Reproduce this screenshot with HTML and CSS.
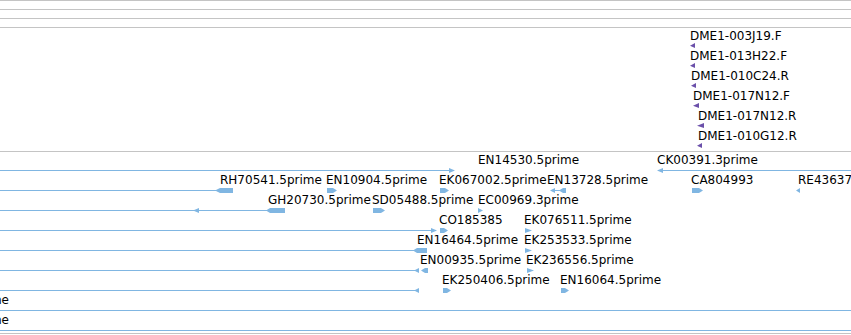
FILE: index.html
```html
<!DOCTYPE html>
<html>
<head>
<meta charset="utf-8">
<title>Tracks</title>
<link rel="stylesheet" href="styles.css">
</head>
<body>
<div class="browser">
  <div class="ruler">
    <div class="hl"></div>
    <div class="hl"></div>
    <div class="hl"></div>
    <div class="hl"></div>
  </div>

  <div class="track purple">
    <div class="row">
      <span class="lbl" style="left:690px">DME1-003J19.F</span>
      <span class="pm" style="left:690px;width:5px"></span>
    </div>
    <div class="row">
      <span class="lbl" style="left:690px">DME1-013H22.F</span>
      <span class="pm" style="left:690px;width:5px"></span>
    </div>
    <div class="row">
      <span class="lbl" style="left:691px">DME1-010C24.R</span>
      <span class="pm" style="left:691px;width:5px"></span>
    </div>
    <div class="row">
      <span class="lbl" style="left:693px">DME1-017N12.F</span>
      <span class="pm" style="left:693px;width:6px"></span>
    </div>
    <div class="row">
      <span class="lbl" style="left:698px">DME1-017N12.R</span>
      <span class="pm" style="left:697px;width:7px"></span>
    </div>
    <div class="row">
      <span class="lbl" style="left:698px">DME1-010G12.R</span>
      <span class="pm" style="left:697px;width:5px"></span>
    </div>
  </div>

  <div class="sep"></div>

  <div class="track blue">
    <div class="row">
      <span class="ln" style="left:0;width:450px"></span>
      <span class="f tri-r" style="left:449px;width:6px"></span>
      <span class="lbl" style="left:478px">EN14530.5prime</span>
      <span class="lbl" style="left:657px">CK00391.3prime</span>
      <span class="f tri-l" style="left:657px;width:6px"></span>
      <span class="ln" style="left:662px;width:189px"></span>
    </div>
    <div class="row">
      <span class="ln" style="left:0;width:216px"></span>
      <span class="f tri-l" style="left:215px;width:5px"></span>
      <span class="f" style="left:220px;width:13px"></span>
      <span class="lbl" style="left:220px">RH70541.5prime</span>
      <span class="lbl" style="left:326px">EN10904.5prime</span>
      <span class="f box-r" style="left:327px;width:10px"></span>
      <span class="lbl" style="left:439px">EK067002.5prime</span>
      <span class="f box-r" style="left:440px;width:9px"></span>
      <span class="lbl" style="left:547px">EN13728.5prime</span>
      <span class="f tri-l" style="left:550px;width:5px"></span>
      <span class="ln" style="left:554px;width:6px"></span>
      <span class="f box-l" style="left:559px;width:7px"></span>
      <span class="lbl" style="left:691px">CA804993</span>
      <span class="f box-r" style="left:692px;width:11px"></span>
      <span class="lbl" style="left:798px">RE43637.5prime</span>
      <span class="f tri-l" style="left:796px;width:4px"></span>
    </div>
    <div class="row">
      <span class="ln" style="left:0;width:268px"></span>
      <span class="f tri-l" style="left:193px;width:6px"></span>
      <span class="f box-l" style="left:266px;width:19px"></span>
      <span class="lbl" style="left:268px">GH20730.5prime</span>
      <span class="lbl" style="left:372px">SD05488.5prime</span>
      <span class="f box-r" style="left:373px;width:12px"></span>
      <span class="lbl" style="left:478px">EC00969.3prime</span>
      <span class="f tri-r" style="left:478px;width:5px"></span>
    </div>
    <div class="row">
      <span class="ln" style="left:0;width:433px"></span>
      <span class="f tri-r" style="left:431px;width:6px"></span>
      <span class="lbl" style="left:439px">CO185385</span>
      <span class="f box-r" style="left:440px;width:8px"></span>
      <span class="lbl" style="left:524px">EK076511.5prime</span>
      <span class="f tri-r" style="left:525px;width:7px"></span>
    </div>
    <div class="row">
      <span class="ln" style="left:0;width:415px"></span>
      <span class="f box-l" style="left:413px;width:14px"></span>
      <span class="lbl" style="left:417px">EN16464.5prime</span>
      <span class="lbl" style="left:524px">EK253533.5prime</span>
      <span class="f tri-r" style="left:525px;width:7px"></span>
    </div>
    <div class="row">
      <span class="ln" style="left:0;width:415px"></span>
      <span class="f tri-l" style="left:414px;width:5px"></span>
      <span class="f box-l" style="left:421px;width:7px"></span>
      <span class="lbl" style="left:420px">EN00935.5prime</span>
      <span class="lbl" style="left:526px">EK236556.5prime</span>
      <span class="f tri-r" style="left:527px;width:7px"></span>
    </div>
    <div class="row">
      <span class="ln" style="left:0;width:416px"></span>
      <span class="f tri-l" style="left:414px;width:5px"></span>
      <span class="lbl" style="left:442px">EK250406.5prime</span>
      <span class="f box-r" style="left:443px;width:8px"></span>
      <span class="lbl" style="left:560px">EN16064.5prime</span>
      <span class="f box-r" style="left:561px;width:8px"></span>
    </div>
    <div class="row">
      <span class="lbl lbl-cut">EK237016.5prime</span>
      <span class="ln full"></span>
    </div>
    <div class="row">
      <span class="lbl lbl-cut">EN08125.5prime</span>
      <span class="ln full"></span>
    </div>
  </div>

  <div class="sep sep-bottom"></div>
</div>
</body>
</html>
```

FILE: styles.css
```css
html, body {
  margin: 0;
  padding: 0;
  background: #ffffff;
}

.browser {
  width: 851px;
  height: 335px;
  overflow: hidden;
  display: flex;
  flex-direction: column;
  font-family: "DejaVu Sans", sans-serif;
  font-size: 12px;
  color: #000000;
}

.ruler {
  display: flex;
  flex-direction: column;
  gap: 8px;
}

.hl,
.sep {
  height: 1px;
  background: #c4c4c4;
  flex: none;
}

.track {
  display: flex;
  flex-direction: column;
  flex: none;
}

.track.purple {
  margin-bottom: 3px;
}

.track.blue {
  padding-bottom: 1px;
}

.row {
  position: relative;
  height: 20px;
  flex: none;
}

.lbl {
  position: absolute;
  top: 1px;
  line-height: 14px;
  white-space: nowrap;
}

.lbl-cut {
  right: 842px;
}

.ln {
  position: absolute;
  top: 18px;
  height: 1px;
  background: #80b6e2;
}

.ln.full {
  left: 0;
  right: 0;
}

.f {
  position: absolute;
  top: 16px;
  height: 5px;
  background: #80b6e2;
}

.pm {
  position: absolute;
  top: 15px;
  height: 5px;
  background: #6b50aa;
  clip-path: polygon(100% 0, 100% 100%, 0 55%);
}

.tri-r {
  clip-path: polygon(0 0, 100% 50%, 0 100%);
}

.tri-l {
  clip-path: polygon(100% 0, 0 50%, 100% 100%);
}

.box-r {
  clip-path: polygon(0 0, calc(100% - 4px) 0, 100% 50%, calc(100% - 4px) 100%, 0 100%);
}

.box-l {
  clip-path: polygon(4px 0, 100% 0, 100% 100%, 4px 100%, 0 50%);
}
```
